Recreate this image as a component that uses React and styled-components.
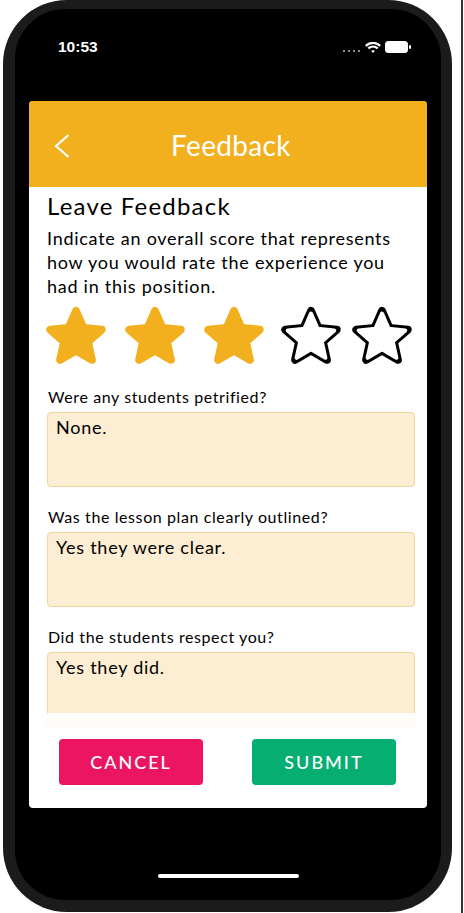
import React from 'react';
import styled, { createGlobalStyle } from 'styled-components';

const GlobalStyle = createGlobalStyle`
  html, body { margin: 0; padding: 0; background: #fff; }
  * { box-sizing: border-box; }
`;

const Page = styled.div`
  width: 463px;
  height: 913px;
  overflow: hidden;
  padding-left: 3px;
  border-right: 2px solid #333;
  font-family: "Lato", "Open Sans", sans-serif;
`;
const Phone = styled.div`
  width: 449px;
  height: 912px;
  padding: 9px 11px 12px 12px;
  background: #1b1b1b;
  border-radius: 64px;
`;
const Screen = styled.div`
  height: 100%;
  background: #000;
  border-radius: 50px;
  padding: 0 14px 0 14px;
  display: flex;
  flex-direction: column;
`;
const StatusBar = styled.div`
  height: 92px;
  display: flex;
  justify-content: space-between;
  align-items: flex-start;
  padding: 28px 16px 0 29px;
  color: #fff;
`;
const Time = styled.span`
  font-family: "Liberation Sans", sans-serif;
  font-size: 15.5px;
  font-weight: 700;
  line-height: 20px;
`;
const StatusIcons = styled.div`
  display: flex;
  align-items: center;
  gap: 4px;
  height: 20px;
`;
const Card = styled.div`
  height: 707px;
  background: #fff;
  border-radius: 4px;
  overflow: hidden;
  display: flex;
  flex-direction: column;
`;
const Header = styled.div`
  height: 86px;
  flex: none;
  background: #f2b01f;
  display: flex;
  align-items: center;
  padding: 3px 0 0 25px;
  position: relative;
  color: #fff;
`;
const HeaderTitle = styled.div`
  position: absolute;
  left: 0;
  right: 0;
  top: 26px;
  text-align: center;
  font-size: 28px;
  line-height: 36px;
  letter-spacing: 0.35px;
  padding-left: 6px;
`;
const Body = styled.div`
  flex: none;
  height: 540px;
  overflow: hidden;
  position: relative;
  padding: 5px 12px 0 18px;
`;
const Heading = styled.div`
  font-size: 24px;
  line-height: 28px;
  letter-spacing: 1.2px;
  color: #000;
`;
const Intro = styled.div`
  margin-top: 6px;
  max-width: 352px;
  font-size: 18px;
  line-height: 24px;
  letter-spacing: 0.73px;
  color: #000;
`;
const Stars = styled.div`
  display: flex;
  margin-top: 7px;
  margin-left: -1px;
  height: 60px;
`;
const Star = styled.svg`
  flex: none;
  margin-right: ${(p) => p.$gap}px;
`;
const Field = styled.div`
  margin-top: ${(p) => p.$first ? 22 : 20}px;
`;
const Label = styled.div`
  padding-left: 1px;
  font-size: 16px;
  line-height: 20px;
  letter-spacing: 0.6px;
  color: #000;
  margin-bottom: 5px;
`;
const Answer = styled.div`
  height: 75px;
  background: #fdeed3;
  border: 1px solid #f0d59f;
  border-radius: 4px;
  padding: 2px 8px;
  font-size: 18px;
  line-height: 24px;
  letter-spacing: 0.75px;
  color: #000;
`;
const Fade = styled.div`
  position: absolute;
  left: 0;
  right: 0;
  bottom: 0;
  height: 14px;
  background: rgba(255, 255, 255, 0.85);
`;
const Actions = styled.div`
  flex: 1;
  display: flex;
  justify-content: space-between;
  padding: 12px 31px 0 30px;
`;
const ActionButton = styled.button`
  width: 144px;
  height: 46px;
  border: 0;
  border-radius: 4px;
  background: ${(p) => p.$color};
  color: #fff;
  font-family: inherit;
  font-size: 18px;
  font-weight: 500;
  letter-spacing: 2px;
`;
const HomeBar = styled.div`
  width: 141px;
  height: 4px;
  margin: 66px auto 0;
  background: #fff;
  border-radius: 2px;
`;

// rounded five point star, the stroke gives the soft corners
const makeStar = (outer, inner) => {
  const pts = [];
  for (let i = 0; i < 10; i++) {
    const r = i % 2 === 0 ? outer : inner;
    const a = (Math.PI / 5) * i - Math.PI / 2;
    pts.push(`${(30 + r * Math.cos(a)).toFixed(2)},${(33 + r * Math.sin(a)).toFixed(2)}`);
  }
  return pts.join(' ');
};

const RatingStar = ({ filled, gap }) => (
  <Star $gap={gap} width="60" height="60" viewBox="0 0 60 60" strokeLinejoin="round">
    <polygon
      points={makeStar(27, 12.5)}
      fill={filled ? '#f2b01f' : '#000'}
      stroke={filled ? '#f2b01f' : '#000'}
      strokeWidth="8"
    />
    {!filled && (
      <polygon points={makeStar(24.5, 11.3)} fill="#fff" stroke="#fff" strokeWidth="4" />
    )}
  </Star>
);

const WifiIcon = () => (
  <svg width="16" height="11" viewBox="0 0 16 11" fill="none" stroke="#fff" strokeWidth="2.3">
    <path d="M.8 3.8c4.2-3.8 10.2-3.8 14.4 0" />
    <path d="M3.3 6.4c2.8-2.4 6.6-2.4 9.4 0" />
    <path d="M8 11 6 8.7c1.2-.7 2.8-.7 4 0Z" fill="#fff" stroke="none" />
  </svg>
);

const BatteryIcon = () => (
  <svg width="26" height="12" viewBox="0 0 26 12">
    <rect x="0" y="0" width="23" height="12" rx="3.5" fill="#fff" />
    <rect x="24" y="4" width="2" height="4" rx="1" fill="#fff" />
  </svg>
);

const SignalDots = () => (
  <svg width="18" height="11" viewBox="0 0 18 11">
    {[1, 6, 11, 16].map((x) => <circle key={x} cx={x} cy="9" r="1" fill="#bbb" />)}
  </svg>
);

const BackIcon = () => (
  <svg width="16" height="24" viewBox="0 0 16 24">
    <path d="M14.5 1 2 12l12.5 11" fill="none" stroke="#fff" strokeWidth="2.2" />
  </svg>
);

const questions = [
  ['Were any students petrified?', 'None.'],
  ['Was the lesson plan clearly outlined?', 'Yes they were clear.'],
  ['Did the students respect you?', 'Yes they did.'],
];

export default function App() {
  return (
    <Page>
      <GlobalStyle />
      <Phone>
        <Screen>
          <StatusBar>
            <Time>10:53</Time>
            <StatusIcons>
              <SignalDots />
              <WifiIcon />
              <BatteryIcon />
            </StatusIcons>
          </StatusBar>
          <Card>
            <Header>
              <BackIcon />
              <HeaderTitle>Feedback</HeaderTitle>
            </Header>
            <Body>
              <Heading>Leave Feedback</Heading>
              <Intro>
                Indicate an overall score that represents how you would rate the experience you had in this position.
              </Intro>
              <Stars>
                <RatingStar filled gap={19} />
                <RatingStar filled gap={19} />
                <RatingStar filled gap={17} />
                <RatingStar gap={11} />
                <RatingStar gap={0} />
              </Stars>
              {questions.map(([q, a], i) => (
                <Field key={q} $first={i === 0}>
                  <Label>{q}</Label>
                  <Answer>{a}</Answer>
                </Field>
              ))}
              <Fade />
            </Body>
            <Actions>
              <ActionButton $color="#ec1561">CANCEL</ActionButton>
              <ActionButton $color="#06ae72">SUBMIT</ActionButton>
            </Actions>
          </Card>
          <HomeBar />
        </Screen>
      </Phone>
    </Page>
  );
}
